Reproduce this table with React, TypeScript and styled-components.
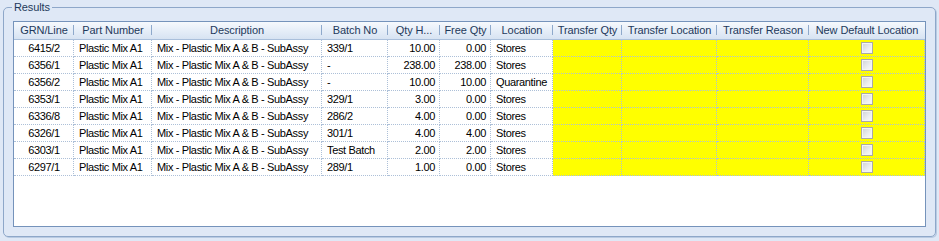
import React, { FC } from 'react';
import styled, { createGlobalStyle } from 'styled-components';

const GlobalStyle = createGlobalStyle`
  html,
  body {
    margin: 0;
    padding: 0;
    background: #dfe8f6;
    height: 100%;
  }

  body {
    padding-top: 1px;
    box-sizing: border-box;
    font-family: "Liberation Sans", Arial, sans-serif;
    font-size: 11px;
  }
`;

// column widths taken from the header separators
const COLUMNS = [60, 78, 170, 66, 52, 51, 62, 69, 95, 92, 116];
const TEMPLATE = COLUMNS.map((w) => `${w}px`).join(' ');

type Align = 'left' | 'center' | 'right';

interface Column {
  title: string;
  align: Align;
  editable?: boolean;
}

const columns: Column[] = [
  { title: 'GRN/Line', align: 'center' },
  { title: 'Part Number', align: 'left' },
  { title: 'Description', align: 'left' },
  { title: 'Batch No', align: 'left' },
  { title: 'Qty H...', align: 'right' },
  { title: 'Free Qty', align: 'right' },
  { title: 'Location', align: 'left' },
  { title: 'Transfer Qty', align: 'left', editable: true },
  { title: 'Transfer Location', align: 'left', editable: true },
  { title: 'Transfer Reason', align: 'left', editable: true },
  { title: 'New Default Location', align: 'center', editable: true },
];

const rows = [
  ['6415/2', 'Plastic Mix A1', 'Mix - Plastic Mix A & B - SubAssy', '339/1', '10.00', '0.00', 'Stores'],
  ['6356/1', 'Plastic Mix A1', 'Mix - Plastic Mix A & B - SubAssy', '-', '238.00', '238.00', 'Stores'],
  ['6356/2', 'Plastic Mix A1', 'Mix - Plastic Mix A & B - SubAssy', '-', '10.00', '10.00', 'Quarantine'],
  ['6353/1', 'Plastic Mix A1', 'Mix - Plastic Mix A & B - SubAssy', '329/1', '3.00', '0.00', 'Stores'],
  ['6336/8', 'Plastic Mix A1', 'Mix - Plastic Mix A & B - SubAssy', '286/2', '4.00', '0.00', 'Stores'],
  ['6326/1', 'Plastic Mix A1', 'Mix - Plastic Mix A & B - SubAssy', '301/1', '4.00', '4.00', 'Stores'],
  ['6303/1', 'Plastic Mix A1', 'Mix - Plastic Mix A & B - SubAssy', 'Test Batch', '2.00', '2.00', 'Stores'],
  ['6297/1', 'Plastic Mix A1', 'Mix - Plastic Mix A & B - SubAssy', '289/1', '1.00', '0.00', 'Stores'],
];

const GroupBox = styled.fieldset`
  box-sizing: border-box;
  width: 933px;
  height: 236px;
  margin: 0 3px;
  padding: 7px 9px 8px 9px;
  border: 1px solid #8ea7c9;
  border-radius: 5px;
  box-shadow: 1px 1px 0 #b9cbe3;
  min-width: 0;
`;

const Legend = styled.legend`
  padding: 0 2px;
  margin-left: -1px;
  line-height: 13px;
  color: #1e395b;
  letter-spacing: -0.1px;
`;

const Grid = styled.div`
  box-sizing: border-box;
  height: 206px;
  background: #fff;
  border: 1px solid #7593bb;
  overflow: hidden;
`;

const Row = styled.div`
  display: grid;
  grid-template-columns: ${TEMPLATE};
`;

const HeaderCell = styled.div`
  position: relative;
  box-sizing: border-box;
  height: 18px;
  line-height: 17px;
  text-align: center;
  color: #1e395b;
  letter-spacing: -0.1px;
  white-space: nowrap;
  overflow: hidden;
  background: linear-gradient(#f6f9fd 0%, #e6eef8 50%, #d7e3f2 100%);
  border-bottom: 1px solid #a9bfdb;

  &::after {
    content: '';
    position: absolute;
    right: 0;
    top: 3px;
    bottom: 4px;
    width: 1px;
    background: #8ea9cb;
  }

  &:last-child::after {
    display: none;
  }
`;

const Cell = styled.div<{ $align: Align; $editable?: boolean }>`
  box-sizing: border-box;
  height: 17px;
  line-height: 16px;
  padding: 0 4px 0 5px;
  color: #000;
  letter-spacing: -0.35px;
  white-space: nowrap;
  overflow: hidden;
  background: ${({ $editable }) => ($editable ? '#ffff00' : '#fff')};
  border-right: 1px dotted #adc0d8;
  border-bottom: 1px dotted #adc0d8;
  display: flex;
  align-items: center;
  justify-content: ${({ $align }) =>
    $align === 'center' ? 'center' : $align === 'right' ? 'flex-end' : 'flex-start'};
`;

const CheckBox = styled.span`
  box-sizing: border-box;
  display: inline-block;
  width: 12px;
  height: 12px;
  border: 1px solid #a9a9a9;
  box-shadow: inset 0 0 0 1px #f4f4f4;
  background: linear-gradient(135deg, #cfd2d6 0%, #eceef0 60%, #fafafa 100%);
`;

const App: FC = () => (
  <>
    <GlobalStyle />
    <GroupBox>
      <Legend>Results</Legend>
      <Grid>
        <Row>
          {columns.map((col) => (
            <HeaderCell key={col.title}>{col.title}</HeaderCell>
          ))}
        </Row>

        {rows.map((row) => (
          <Row key={row[0]}>
            {columns.map((col, i) => (
              <Cell key={col.title} $align={col.align} $editable={col.editable}>
                {i < row.length ? row[i] : null}
                {i === columns.length - 1 && <CheckBox />}
              </Cell>
            ))}
          </Row>
        ))}
      </Grid>
    </GroupBox>
  </>
);

export default App;
